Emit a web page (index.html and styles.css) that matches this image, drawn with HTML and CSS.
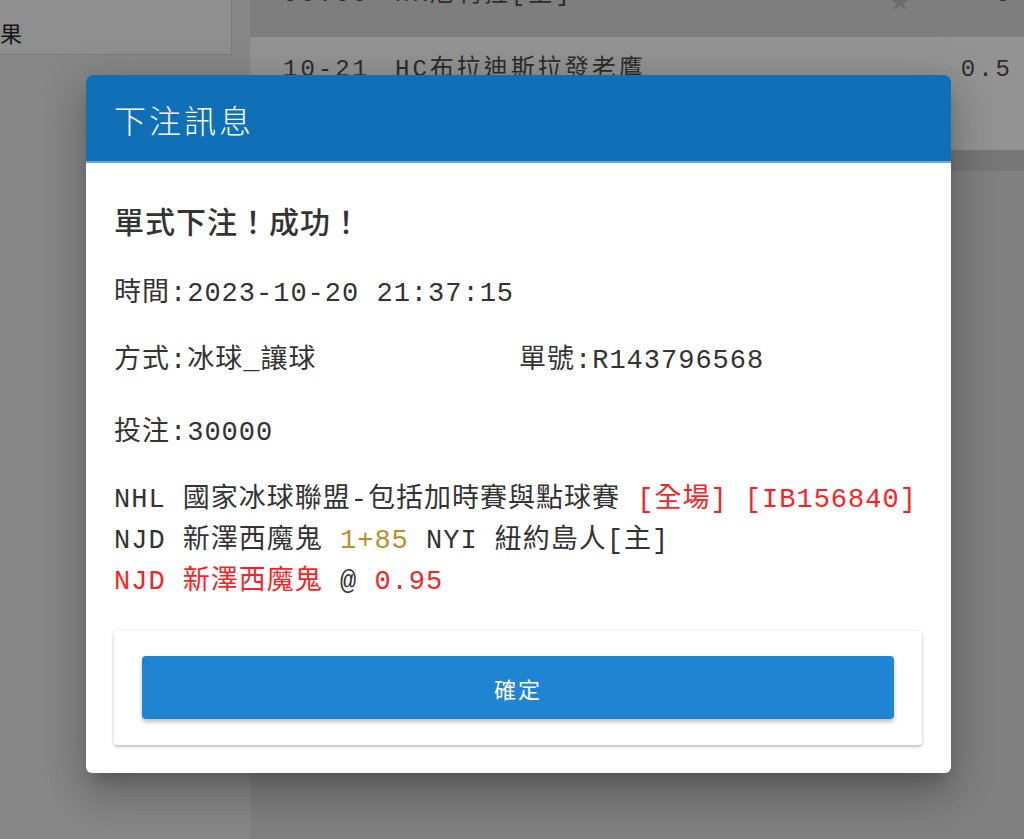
FILE: index.html
```html
<!DOCTYPE html>
<html lang="zh-Hant">
<head>
    <meta charset="UTF-8">
    <meta name="viewport" content="width=device-width, initial-scale=1.0">
    <title>下注訊息</title>
    <link rel="stylesheet" href="styles.css">
</head>
<body>
<div class="page">
    <div class="side">
        <div class="tab">果</div>
    </div>
    <div class="list">
        <div class="row row-top">
            <span class="col-date">00:00</span>
            <span class="col-team">HK尼利拉[主]</span>
            <span class="star">★</span>
            <span class="col-odds">0</span>
        </div>
        <div class="row row-match">
            <span class="col-date">10-21</span>
            <span class="col-team">HC布拉迪斯拉發老鷹</span>
            <span class="col-odds">0.5</span>
        </div>
        <div class="band"></div>
    </div>
</div>

<div class="modal">
    <div class="modal-header">下注訊息</div>
    <div class="modal-body">
        <p class="success">單式下注！成功！</p>
        <p class="line line-time">時間:2023-10-20 21:37:15</p>
        <p class="line line-way">
            <span class="way">方式:冰球_讓球</span>
            <span>單號:R143796568</span>
        </p>
        <p class="line line-amount">投注:30000</p>
        <div class="bet">
            <div>NHL 國家冰球聯盟-包括加時賽與點球賽 <span class="red">[全場]</span> <span class="red">[IB156840]</span></div>
            <div>NJD 新澤西魔鬼 <span class="gold">1+85</span> NYI 紐約島人[主]</div>
            <div><span class="red">NJD 新澤西魔鬼</span> @ <span class="red">0.95</span></div>
        </div>
        <div class="actions">
            <button type="button" class="btn-ok">確定</button>
        </div>
    </div>
</div>
</body>
</html>
```

FILE: styles.css
```css
body {
    margin: 0;
    background: #808080;
    font-family: "Liberation Mono", "Noto Sans CJK TC", monospace;
    color: #333;
    height: 839px;
    overflow: hidden;
}

/* Fondo (página atenuada detrás del diálogo) */
.page {
    display: flex;
    height: 100%;
}

.side {
    width: 250px;
    background: #878787;
}

    .side .tab {
        width: 233px;
        height: 55px;
        margin-left: -1px;
        box-sizing: border-box;
        background: #8f8f8f;
        border: 1px solid #7a7a7a;
        border-top: none;
        font-family: "Noto Sans CJK TC", sans-serif;
        font-size: 22px;
        line-height: 64px;
        color: #151515;
    }

.list {
    flex: 1;
    display: flex;
    flex-direction: column;
    background: #808080;
}

.row {
    display: flex;
    font-size: 24px;
    letter-spacing: 3px;
    color: #2c2c2c;
    padding: 0 11px 0 33px;
    overflow: hidden;
}

.row-top {
    height: 37px;
    background: #7e7e7e;
    align-items: flex-start;
    line-height: 30px;
}

    .row-top span {
        margin-top: -20px;
    }

    .row-top .star {
        margin-top: -14px;
    }

.row-match {
    height: 113px;
    background: #939393;
    line-height: 30px;
    padding-top: 18px;
    box-sizing: border-box;
}

.col-date {
    width: 112px;
}

.col-team {
    flex: 1;
}

.star {
    color: #6b6b6b;
    font-family: "DejaVu Sans", sans-serif;
    font-size: 26px;
    margin-right: 84px;
    letter-spacing: 0;
}

.band {
    height: 21px;
    background: #777;
}

/* Diálogo */
.modal {
    position: absolute;
    left: 86px;
    top: 75px;
    width: 865px;
    background: #fff;
    border-radius: 6px;
    overflow: hidden;
    box-shadow: 0 11px 15px -7px rgba(0, 0, 0, 0.2), 0 24px 38px 3px rgba(0, 0, 0, 0.14), 0 9px 46px 8px rgba(0, 0, 0, 0.12);
}

.modal-header {
    height: 88px;
    box-sizing: border-box;
    background: #0f70b7;
    border-bottom: 2px solid #6fa9da;
    color: #fff;
    font-family: "Noto Sans CJK TC", sans-serif;
    font-size: 32px;
    font-weight: 300;
    letter-spacing: 3px;
    line-height: 88px;
    padding-left: 28px;
}

.modal-body {
    padding: 37px 29px 28px 28px;
    font-size: 27px;
    letter-spacing: 1px;
}

    .modal-body p {
        margin: 0;
        line-height: 40px;
    }

.success {
    font-family: "Noto Sans CJK TC", sans-serif;
    font-size: 30px;
    font-weight: 500;
    letter-spacing: 1px;
}

.line-time {
    margin-top: 34px !important;
}

.line-way {
    display: flex;
    margin-top: 27px !important;
}

    .line-way .way {
        width: 405px;
    }

.line-amount {
    margin-top: 32px !important;
}

.bet {
    margin-top: 27px;
    line-height: 41px;
}

.red {
    color: #ff1f1f;
}

.gold {
    color: #b8902a;
}

.actions {
    margin-top: 28px;
    padding: 25px 28px 26px;
    background: #fff;
    border-radius: 3px;
    box-shadow: 0 2px 3px rgba(0, 0, 0, 0.22), 0 0 4px rgba(0, 0, 0, 0.08);
}

.btn-ok {
    display: block;
    width: 100%;
    height: 63px;
    border: none;
    border-radius: 4px;
    background: #1f84d2;
    color: #fff;
    font-family: "Noto Sans CJK TC", sans-serif;
    font-size: 22px;
    letter-spacing: 2px;
    box-shadow: 0 3px 4px rgba(0, 0, 0, 0.25);
    cursor: pointer;
}
```
